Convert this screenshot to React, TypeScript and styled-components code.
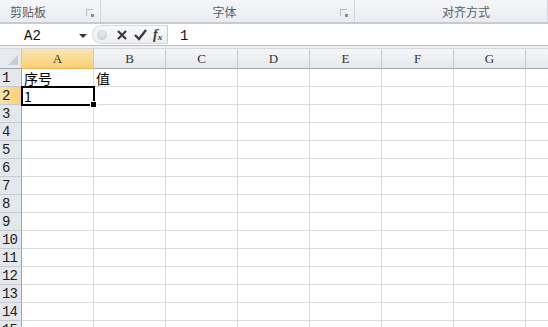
import React from 'react';
import styled, { createGlobalStyle } from 'styled-components';

const GlobalStyle = createGlobalStyle`
  html, body {
    margin: 0;
    padding: 0;
    background: #ffffff;
    overflow: hidden;
  }
  body {
    font-family: "Liberation Sans", "Noto Sans CJK SC", sans-serif;
  }
`;

const COLS = ['A', 'B', 'C', 'D', 'E', 'F', 'G', 'H'];
const ROW_COUNT = 15;

const Window = styled.div`
  width: 548px;
  height: 327px;
  overflow: hidden;
  display: flex;
  flex-direction: column;
  & > * {
    flex-shrink: 0;
  }
`;

const Ribbon = styled.div`
  display: flex;
  height: 22px;
  background: linear-gradient(#f5f6f8, #e9ecf0);
  border-bottom: 2px solid #c6cbd2;
`;

const Group = styled.div<{ $width?: number }>`
  position: relative;
  flex: ${(p) => (p.$width ? `0 0 ${p.$width}px` : '1')};
  display: flex;
  align-items: center;
  justify-content: center;
  border-right: 1px solid #d3d7dd;
  font-family: "Noto Sans CJK SC", sans-serif;
  font-size: 12px;
  color: #5a5f66;
`;

const GroupLabel = styled.span<{ $shift?: number }>`
  transform: translateX(${(p) => p.$shift ?? 0}px);
`;

const Launcher = styled.span`
  position: absolute;
  right: 7px;
  top: 9px;
  width: 6px;
  height: 6px;
  border: 1px solid #b7bcc4;
  border-width: 1px 0 0 1px;
  &::after {
    content: '';
    position: absolute;
    right: -1px;
    bottom: -1px;
    width: 3px;
    height: 3px;
    background: #8a9099;
  }
`;

const FormulaBar = styled.div`
  display: flex;
  align-items: center;
  height: 21px;
  background: #ffffff;
  border-bottom: 1px solid #b9bdc3;
`;

const NameBox = styled.div`
  flex: 0 0 92px;
  display: flex;
  align-items: center;
  height: 100%;
  font-family: "Liberation Mono", monospace;
  font-size: 14px;
  color: #111;
`;

const NameText = styled.span`
  flex: 1;
  padding: 3px 0 0 24px;
`;

const DropArrow = styled.span`
  width: 0;
  height: 0;
  margin: 2px 5px 0 0;
  border-left: 4px solid transparent;
  border-right: 4px solid transparent;
  border-top: 4px solid #333;
`;

const FxPill = styled.div`
  flex: 0 0 76px;
  height: 19px;
  display: flex;
  align-items: center;
  gap: 6px;
  padding-left: 4px;
  box-sizing: border-box;
  border: 1px solid #d6d9de;
  border-right: 1px solid #c8ccd2;
  border-radius: 10px 0 0 10px;
  background: linear-gradient(#f8f9fa, #eceef1);
`;

const Knob = styled.span`
  width: 10px;
  height: 10px;
  border-radius: 50%;
  background: radial-gradient(circle at 50% 35%, #e8eaed, #c4c8ce);
  margin-right: 3px;
`;

const FxGlyph = styled.span`
  font-family: "Liberation Serif", serif;
  font-style: italic;
  font-weight: bold;
  font-size: 14px;
  color: #3a3a3a;
  sub {
    font-size: 9px;
    vertical-align: -1px;
  }
`;

const FormulaInput = styled.div`
  flex: 1;
  padding: 3px 0 0 12px;
  font-family: "Liberation Mono", monospace;
  font-size: 14px;
  color: #111;
`;

const Spacer = styled.div`
  height: 2px;
  background: #eef0f3;
  border-bottom: 1px solid #d5d8dc;
`;

const Sheet = styled.div`
  display: grid;
  grid-template-columns: 22px repeat(8, 72px);
  grid-template-rows: 20px repeat(${ROW_COUNT}, 18px);
`;

const Corner = styled.div`
  position: relative;
  background: #e7eaee;
  border-right: 1px solid #c5cad1;
  border-bottom: 1px solid #9fa6af;
  box-sizing: border-box;
  &::after {
    content: '';
    position: absolute;
    right: 3px;
    bottom: 3px;
    border-left: 10px solid transparent;
    border-bottom: 10px solid #c9ced4;
  }
`;

const ColHead = styled.div<{ $active?: boolean }>`
  display: flex;
  align-items: center;
  justify-content: center;
  box-sizing: border-box;
  background: ${(p) =>
    p.$active
      ? 'linear-gradient(#fbe6b3, #f8cf72)'
      : 'linear-gradient(#f5f6f8, #e4e7eb)'};
  border-right: 1px solid #c5cad1;
  border-bottom: 1px solid ${(p) => (p.$active ? '#f2b24c' : '#9fa6af')};
  font-family: "Liberation Serif", serif;
  font-size: 13px;
  color: #333;
`;

const RowHead = styled.div<{ $active?: boolean }>`
  display: flex;
  align-items: center;
  padding-left: 2px;
  box-sizing: border-box;
  background: ${(p) =>
    p.$active ? 'linear-gradient(90deg, #fbe3a8, #f8cf72)' : '#e4e7eb'};
  border-right: 1px solid ${(p) => (p.$active ? '#f2b24c' : '#9fa6af')};
  border-bottom: 1px solid #c5cad1;
  font-family: "Liberation Mono", monospace;
  font-size: 14px;
  letter-spacing: -1px;
  color: #222;
`;

const Cell = styled.div<{ $selected?: boolean }>`
  position: relative;
  display: flex;
  align-items: center;
  padding-left: 2px;
  box-sizing: border-box;
  border-right: 1px solid #dadcdd;
  border-bottom: 1px solid #dadcdd;
  font-family: "Noto Sans CJK SC", sans-serif;
  font-size: 14px;
  color: #000;
  ${(p) =>
    p.$selected &&
    `
    outline: 2px solid #000;
    outline-offset: -1px;
    z-index: 1;
  `}
`;

const FillHandle = styled.span`
  position: absolute;
  right: -4px;
  bottom: -4px;
  width: 5px;
  height: 5px;
  background: #000;
  border: 1px solid #fff;
`;

const Icon = styled.svg`
  display: block;
`;

const data: Record<string, string> = {
  A1: '序号',
  B1: '值',
  A2: '1',
};

export default function App() {
  return (
    <Window>
      <GlobalStyle />
      <Ribbon>
        <Group $width={100}>
          <GroupLabel $shift={-22}>剪贴板</GroupLabel>
          <Launcher />
        </Group>
        <Group $width={253}>
          <GroupLabel $shift={-3}>字体</GroupLabel>
          <Launcher />
        </Group>
        <Group>
          <GroupLabel $shift={15}>对齐方式</GroupLabel>
        </Group>
      </Ribbon>
      <FormulaBar>
        <NameBox>
          <NameText>A2</NameText>
          <DropArrow />
        </NameBox>
        <FxPill>
          <Knob />
          <Icon width="12" height="12" viewBox="0 0 12 12">
            <path d="M2 2 L10 10 M10 2 L2 10" stroke="#3a3a3a" strokeWidth="2.2" />
          </Icon>
          <Icon width="13" height="12" viewBox="0 0 13 12">
            <path d="M1 6 L5 10 L12 1" stroke="#3a3a3a" strokeWidth="2.4" fill="none" />
          </Icon>
          <FxGlyph>
            f<sub>x</sub>
          </FxGlyph>
        </FxPill>
        <FormulaInput>1</FormulaInput>
      </FormulaBar>
      <Spacer />
      <Sheet>
        <Corner />
        {COLS.map((c) => (
          <ColHead key={c} $active={c === 'A'}>
            {c}
          </ColHead>
        ))}
        {Array.from({ length: ROW_COUNT }, (_, i) => i + 1).map((r) => (
          <React.Fragment key={r}>
            <RowHead $active={r === 2}>{r}</RowHead>
            {COLS.map((c) => {
              const id = `${c}${r}`;
              const sel = id === 'A2';
              return (
                <Cell key={id} $selected={sel}>
                  {data[id]}
                  {sel && <FillHandle />}
                </Cell>
              );
            })}
          </React.Fragment>
        ))}
      </Sheet>
    </Window>
  );
}
